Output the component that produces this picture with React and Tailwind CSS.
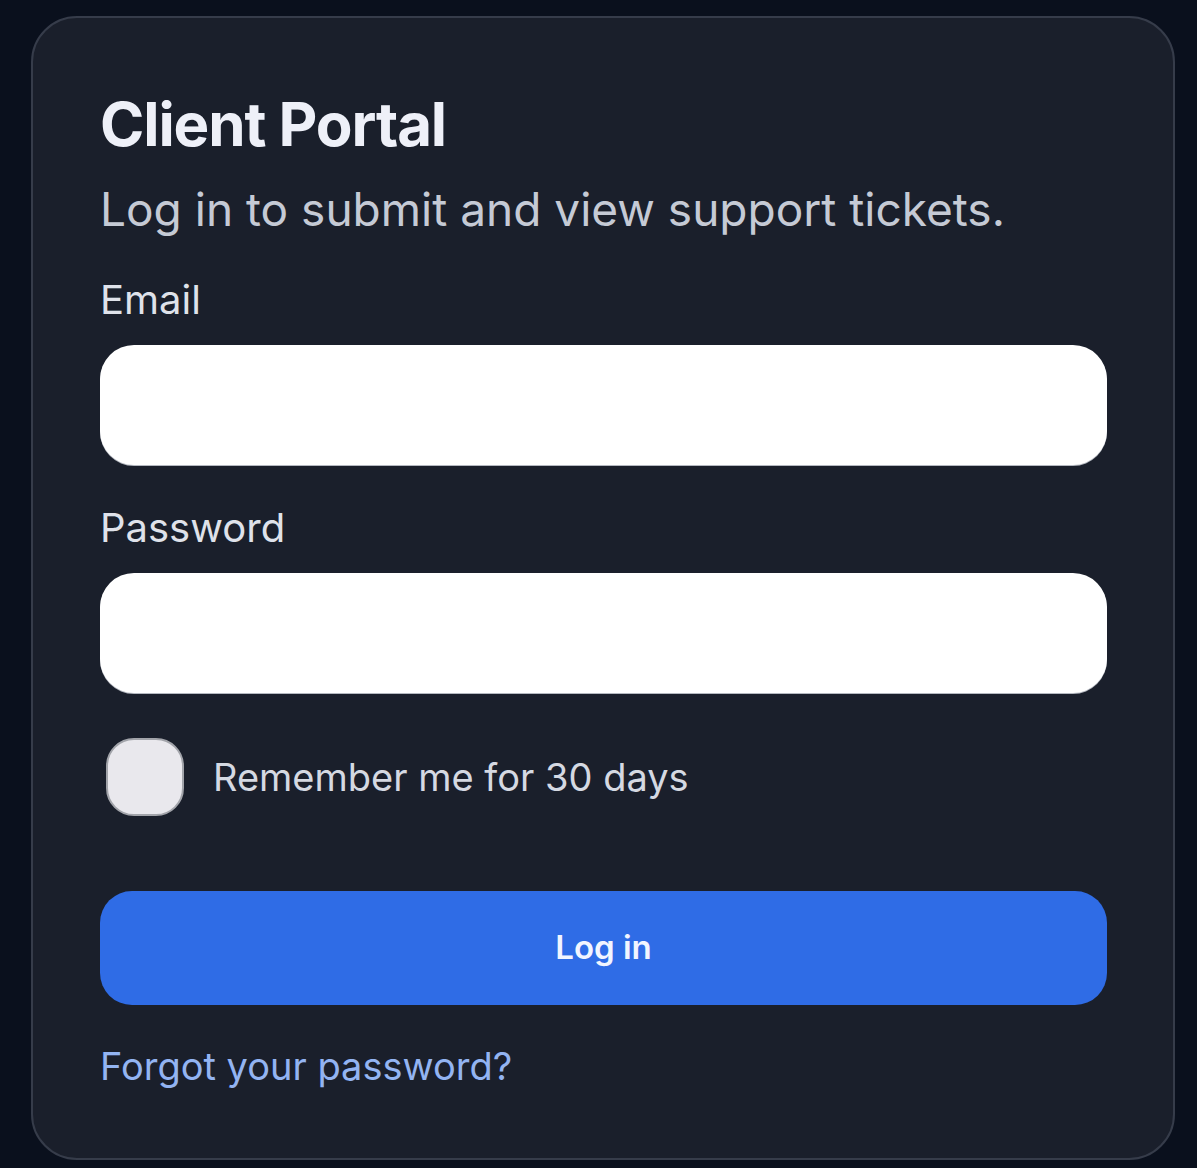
import { useState } from 'react'

export default function App() {
  const [email, setEmail] = useState('')
  const [password, setPassword] = useState('')
  const [remember, setRemember] = useState(false)

  return (
    <div className="min-h-screen bg-[#0a101d] px-[31px] pt-[16px] pb-[8px] font-['Inter','Liberation_Sans',sans-serif]">
      <div className="w-[1144px] h-[1144px] rounded-[46px] border-2 border-[#363c4a] bg-[#1a1f2b] pl-[67px] pr-[66px] pt-[76px]">
        <h1 className="text-[60px] leading-[60px] font-bold text-[#eef0f8] tracking-[-1.1px]">Client Portal</h1>
        <p className="mt-[27px] text-[46px] leading-[56px] text-[#c5cad5]">Log in to submit and view support tickets.</p>

        <form className="mt-[38px] flex flex-col" onSubmit={e => e.preventDefault()}>
          <label className="text-[40px] leading-[50px] text-[#dfe2ea]">Email</label>
          <input
            type="email"
            value={email}
            onChange={e => setEmail(e.target.value)}
            className="mt-[20px] h-[120px] w-full rounded-[34px] bg-white shadow-[0_1px_0_#b4b8c0] outline-none px-8 text-[40px]"
          />

          <label className="mt-[38px] text-[40px] leading-[50px] text-[#dfe2ea]">Password</label>
          <input
            type="password"
            value={password}
            onChange={e => setPassword(e.target.value)}
            className="mt-[20px] h-[120px] w-full rounded-[34px] bg-white shadow-[0_1px_0_#b4b8c0] outline-none px-8 text-[40px]"
          />

          <div className="mt-[45px] flex items-center gap-[29px] cursor-pointer" onClick={() => setRemember(!remember)}>
            <div className={`ml-[6px] w-[78px] h-[78px] rounded-[28px] border-2 border-[#a2a4aa] ${remember ? 'bg-[#2f6ce6]' : 'bg-[#e9e8ed]'}`} />
            <span className="text-[38px] leading-[46px] text-[#d5d9e2]">Remember me for 30 days</span>
          </div>

          <button
            type="submit"
            className="mt-[75px] h-[114px] w-full rounded-[32px] bg-[#2f6ce6] text-[33px] font-semibold text-[#f2f5ff]"
          >
            Log in
          </button>

          <a href="#" className="mt-[38px] text-[38px] leading-[46px] text-[#93b4f2]">Forgot your password?</a>
        </form>
      </div>
    </div>
  )
}
